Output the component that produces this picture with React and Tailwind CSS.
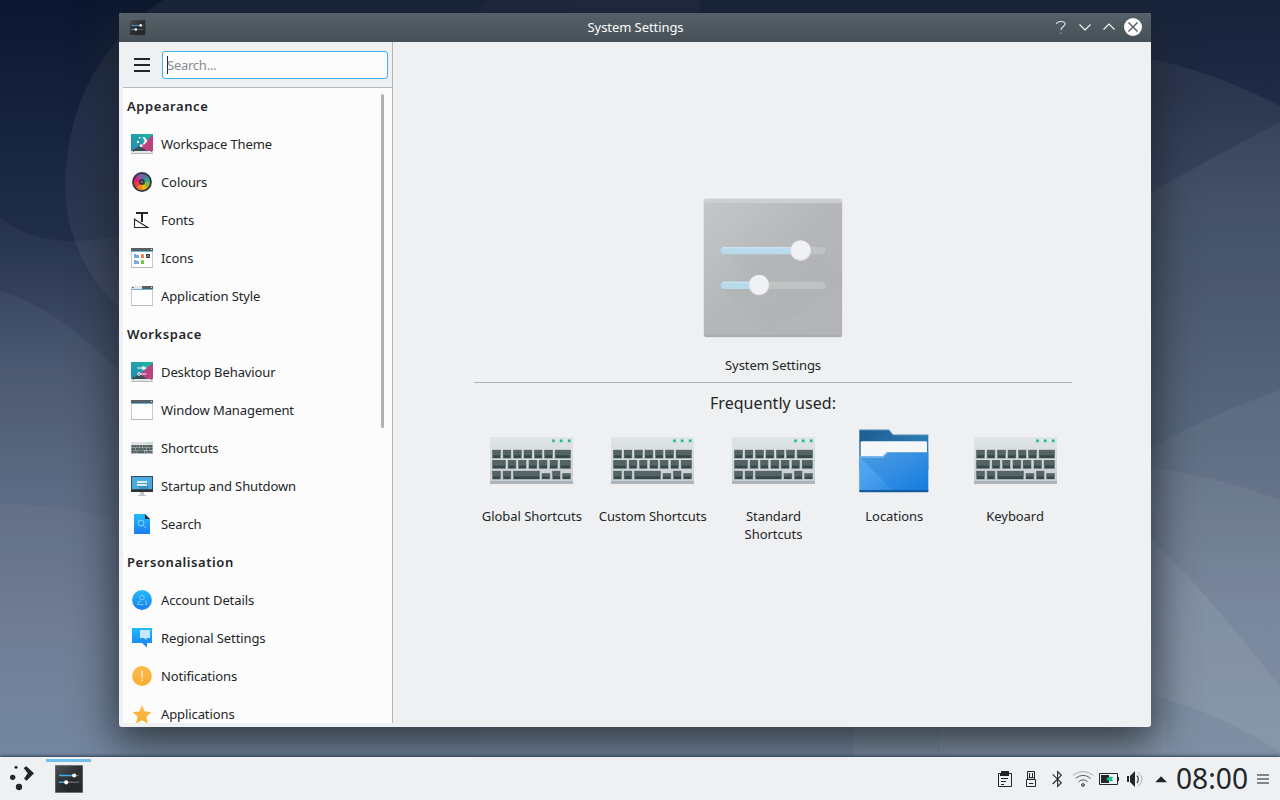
import React from "react";

function Wallpaper() {
  return (
    <svg className="absolute inset-0" width="1280" height="800" viewBox="0 0 1280 800">
      <defs>
        <linearGradient id="sky" x1="0" y1="0" x2="0" y2="757" gradientUnits="userSpaceOnUse">
          <stop offset="0" stopColor="#0b1730" />
          <stop offset="0.16" stopColor="#162340" />
          <stop offset="0.32" stopColor="#212e4a" />
          <stop offset="0.5" stopColor="#3f4e69" />
          <stop offset="0.66" stopColor="#51607a" />
          <stop offset="0.85" stopColor="#61718c" />
          <stop offset="1" stopColor="#657a95" />
        </linearGradient>
        <linearGradient id="east" x1="0" y1="0" x2="0" y2="757" gradientUnits="userSpaceOnUse">
          <stop offset="0" stopColor="#17233b" />
          <stop offset="0.13" stopColor="#1f2b46" />
          <stop offset="0.27" stopColor="#2e3d57" />
          <stop offset="0.5" stopColor="#3f5069" />
          <stop offset="0.65" stopColor="#4b5c75" />
          <stop offset="0.8" stopColor="#5a6c87" />
          <stop offset="1" stopColor="#627690" />
        </linearGradient>
      </defs>
      <rect width="1280" height="800" fill="url(#sky)" />
      <path d="M0 218C28 238 60 250 140 232H900V800H0Z" fill="#fff" opacity="0.04" />
      <path d="M0 291C45 305 80 330 140 392H900V800H0Z" fill="#fff" opacity="0.04" />
      <path d="M0 504C40 504 80 509 140 526H900V800H0Z" fill="#fff" opacity="0.03" />
      <path d="M163 0C90 50 65 120 65 190C67 240 90 290 140 325H570V0Z" fill="#fff" opacity="0.06" />
      <path d="M570 0H1280V800H853L860 400H570Z" fill="url(#east)" />
      <path d="M486 0H570V20H474Z" fill="#fff" opacity="0.02" />
      <path d="M570 0H700V20H570Z" fill="#fff" opacity="0.03" />
      <path d="M860 56H1140Q1215 72 1280 106V800H853Z" fill="#fff" opacity="0.06" />
      <path d="M860 199H1140Q1210 158 1280 122V800H853Z" fill="#fff" opacity="0.05" />
      <path d="M860 455H1140Q1205 416 1280 390V800H853Z" fill="#fff" opacity="0.05" />
      <path d="M860 466H1140Q1210 474 1280 500V800H853Z" fill="#fff" opacity="0.05" />
      <path d="M945 528H1140Q1210 595 1280 687V800H940Z" fill="#fff" opacity="0.07" />
      <path d="M945 693H1140Q1210 707 1280 752V800H940Z" fill="#456587" opacity="0.12" />
      <path d="M1150 640Q1167 680 1167 760H945V640Z" fill="#fff" opacity="0.03" />
      <path d="M474 800C476 770 480 745 486 720H860L853 800Z" fill="#fff" opacity="0.02" />
    </svg>
  );
}

function SettingsTile({ size }) {
  return (
    <svg width={size} height={size} viewBox="0 0 28 28">
      <defs>
        <linearGradient id="tile" x1="0" y1="0" x2="1" y2="1">
          <stop offset="0" stopColor="#4b4f53" />
          <stop offset="0.5" stopColor="#2d3033" />
          <stop offset="1" stopColor="#292b2e" />
        </linearGradient>
      </defs>
      <rect width="28" height="28" rx="0.8" fill="#6d7275" />
      <rect x="0.7" y="1" width="26.6" height="26" fill="url(#tile)" />
      <path d="M4 11l7 6 8-6 8 8v8H12L4 18Z" fill="#1e2022" opacity="0.35" />
      <path d="M4 10.5h15M4 17.3h7" stroke="#3daee9" strokeWidth="1.4" />
      <path d="M19 10.5h5M11 17.3h13" stroke="#606468" strokeWidth="1.4" />
      <circle cx="19.2" cy="10.5" r="2.1" fill="#fcfcfc" />
      <circle cx="11.2" cy="17.3" r="2.1" fill="#fcfcfc" />
    </svg>
  );
}

function BigSettings() {
  return (
    <svg width="140" height="140" viewBox="39 39 420 420">
      <defs>
        <linearGradient id="bigTile" x1="0" y1="0" x2="1" y2="1">
          <stop offset="0" stopColor="#c5c6c8" />
          <stop offset="0.5" stopColor="#b4b6b8" />
          <stop offset="1" stopColor="#b3b4b6" />
        </linearGradient>
      </defs>
      <rect x="40" y="40" width="418" height="418" rx="9" fill="#dfe0e2" />
      <rect x="42" y="42" width="414" height="414" rx="7" fill="#cdced0" />
      <path d="M42 54H456V449Q456 456 449 456H49Q42 456 42 449Z" fill="url(#bigTile)" />
      <path d="M96 204L175 276 96 308 203 409 234 442 456 310V262L398 204Z" fill="#acaeb0" opacity="0.2" />
      <path d="M43 449Q44 456 50 456H448Q455 456 455 449Z" fill="#a9abad" />
      <rect x="93" y="186" width="313" height="22" rx="10" fill="#c1c2c4" />
      <rect x="93" y="290" width="313" height="22" rx="10" fill="#c1c2c4" />
      <path d="M103 186H320V208H103A11 11 0 0 1 103 186ZM103 290H200V312H103A11 11 0 0 1 103 290Z" fill="#b9daeb" />
      <path d="M99 188H310M99 292H190" stroke="#cae4f1" strokeWidth="4" />
      <circle cx="332" cy="197" r="31" fill="#dddee0" />
      <circle cx="207" cy="300" r="31" fill="#dddee0" />
      <circle cx="332" cy="195.500" r="29" fill="#f0f1f3" />
      <circle cx="207" cy="299" r="29" fill="#f0f1f3" />
    </svg>
  );
}

const fullKeys = [
  [67, 240, 25], [99, 240, 24], [130, 240, 25], [161, 240, 25], [193, 240, 24], [223, 240, 25], [255, 240, 47],
  [67, 271, 40], [114, 271, 24], [145, 271, 24], [176, 271, 25], [207, 271, 25], [239, 271, 24], [270, 271, 32],
  [67, 303, 25], [99, 303, 24], [130, 303, 79], [247, 303, 24],
];

function KeyboardPicture({ width, height }) {
  return (
    <svg width={width} height={height} viewBox="60 201 249 141" preserveAspectRatio="none">
      <defs>
        <linearGradient id="kbd" x1="0" y1="0" x2="0" y2="1">
          <stop offset="0" stopColor="#e0e6e7" />
          <stop offset="1" stopColor="#c6cbd0" />
        </linearGradient>
      </defs>
      <path d="M60 201H309V342H60Z" fill="url(#kbd)" />
      <path d="M60 333H309V342H60Z" fill="#abb4bb" />
      {fullKeys.map(([x, y, w]) => (
        <g key={`${x}-${y}`}>
          <rect x={x - 1} y={y - 1} width={w + 2} height="27" fill="#99a4a5" />
          <rect x={x + 1} y={y} width={w - 2} height="24" fill="#34484a" />
          <rect x={x + 1} y={y} width={w - 2} height="16" fill="#566365" />
        </g>
      ))}
      {[215, 277].map((x) => (
        <g key={x}>
          <rect x={x - 1} y="309" width="27" height="19" fill="#99a4a5" />
          <rect x={x + 1} y="311" width="23" height="16" fill="#34484a" />
          <rect x={x + 1} y="311" width="23" height="9" fill="#566365" />
        </g>
      ))}
      {[246, 269, 293].map((x) => (
        <g key={x}>
          <rect x={x - 1} y="207" width="11" height="11" fill="#a6dcc6" />
          <rect x={x + 1} y="209" width="7" height="7" fill="#27b883" />
        </g>
      ))}
    </svg>
  );
}

function FolderPicture() {
  return (
    <svg className="mt-px" width="70" height="64" viewBox="239 176 210 192">
      <defs>
        <linearGradient id="folderBack" x1="0" y1="0" x2="1" y2="0.5">
          <stop offset="0" stopColor="#1b5d90" />
          <stop offset="1" stopColor="#2d7fb8" />
        </linearGradient>
        <linearGradient id="folderFront" x1="0" y1="0" x2="1" y2="1">
          <stop offset="0" stopColor="#4a9ce0" />
          <stop offset="0.45" stopColor="#378fe2" />
          <stop offset="1" stopColor="#127be0" />
        </linearGradient>
        <linearGradient id="folderSheen" x1="0" y1="0" x2="1" y2="1">
          <stop offset="0" stopColor="#5bb1fb" stopOpacity="0.7" />
          <stop offset="1" stopColor="#5bb1fb" stopOpacity="0.1" />
        </linearGradient>
      </defs>
      <path d="M240 178H329L341 193H447V300H240Z" fill="url(#folderBack)" />
      <path d="M240 179H329L341 194H447" fill="none" stroke="#6f9fc3" strokeWidth="2.500" />
      <rect x="244" y="213" width="199" height="60" rx="4" fill="#f6f7f8" />
      <path d="M240 258H311L323 246H447V365H240Z" fill="url(#folderFront)" />
      <path d="M240 260L345 365H240Z" fill="url(#folderSheen)" />
      <path d="M240 260H311L323 248" fill="none" stroke="#79b8ed" strokeWidth="4" />
      <path d="M240 359H447V362Q447 366 443 366H244Q240 366 240 362Z" fill="#155c9f" />
    </svg>
  );
}

function DesktopIcon({ variant }) {
  return (
    <svg width="22" height="22" viewBox="0 0 22 22">
      <defs>
        <linearGradient id="teal" x1="0" y1="1" x2="1" y2="0">
          <stop offset="0" stopColor="#2980b9" />
          <stop offset="1" stopColor="#1abc9c" />
        </linearGradient>
      </defs>
      <path d="M0 1H22V21H0Z" fill="url(#teal)" />
      <path d="M22 2V18H15L9 13Z" fill="#b8437e" />
      <path d="M0 18L8.500 13 16 18Z" fill="#3f4b52" />
      <path d="M0 18H22V20H0Z" fill="#e3e6e9" />
      <path d="M0 20H22V21H0Z" fill="#b4babf" />
      <path d="M2 18.500H3M20 18.500H21" stroke="#6d6d6d" />
      {variant === "theme" ? (
        <g fill="#fff">
          <path d="M11.500 4H13.500L16.500 8 13.500 11.500H11.500L13.800 8Z" />
          <rect x="8" y="4" width="1.400" height="1.400" />
          <rect x="6" y="8" width="2" height="2" />
          <rect x="9" y="11.500" width="2.400" height="2.400" />
        </g>
      ) : (
        <g stroke="#f5f6f7" fill="none">
          <path d="M6 7H15.500M9 13H15.500" />
          <circle cx="12.500" cy="7" r="1.500" fill="#fff" />
          <circle cx="8" cy="13" r="1.300" />
        </g>
      )}
    </svg>
  );
}

function ColoursIcon() {
  const wedges = ["#80b848", "#f0b51c", "#fb8522", "#ef3946", "#df2077", "#9953a4", "#5277a8", "#36a38c"];
  return (
    <svg width="22" height="22" viewBox="-11 -11 22 22">
      <circle r="9.900" fill="#30363a" />
      {wedges.map((c, i) => (
        <path key={c} d="M0 0L8.300 0A8.300 8.300 0 0 1 5.600 6.100Z" fill={c} transform={`rotate(${i * 45})`} />
      ))}
      <circle r="8" fill="none" stroke="#000" strokeOpacity="0.15" />
      <circle r="2.900" fill="#343b3f" />
      <circle r="1" fill="#777d80" />
    </svg>
  );
}

function FontsIcon() {
  return (
    <svg width="22" height="22" viewBox="0 0 22 22">
      <path d="M5 3H17V5H12V13H10V5H5Z" fill="#232629" />
      <path d="M3.500 10.300V18.500H16.800Z" stroke="#232629" strokeWidth="1.100" fill="none" />
    </svg>
  );
}

function WindowIcon({ variant }) {
  return (
    <svg width="22" height="22" viewBox="0 0 22 22">
      <path d="M0 1H22V21H0Z" fill="#c6cacd" />
      <path d="M0 20H22V21H0Z" fill="#b3b8bb" />
      <path d="M1 4H21V20H1Z" fill="#fefefe" />
      <path d="M0 1H22V4H0Z" fill="#566067" />
      {variant === "style" && <path d="M0 1H11V4H0Z" fill="#e3e6e8" />}
      {variant === "style" && <path d="M1 2H2.500V3H1Z" fill="#4d565c" />}
      <path d="M0 4H22V5H0Z" fill="#68b4dc" />
      <path d="M20 2H21V3H20Z" fill="#eef0f1" />
      {variant === "icons" && (
        <g>
          <path d="M3 7H5L6 8H8V11H3ZM3 13H5L6 14H8V17H3Z" fill="#77a9dd" />
          <path d="M10 7H12L13 8V11H10Z" fill="#f67d45" />
          <path d="M10 13H12L13 14V17H10Z" fill="#75c631" />
          <path d="M15 7H19V11H15Z" fill="#36454d" />
          <path d="M16 9.500L17 8.500 18 9.500" stroke="#bcefff" fill="none" />
        </g>
      )}
    </svg>
  );
}

function MonitorIcon() {
  return (
    <svg width="22" height="22" viewBox="0 0 22 22">
      <path d="M0 1H22V17H0Z" fill="#34495e" />
      <path d="M1 2H21V14H1Z" fill="#49abe0" />
      <path d="M6 10L9 14H18L16 8Z" fill="#2c83b4" opacity="0.6" />
      <path d="M0 15H22V17H0Z" fill="#2f3437" />
      <path d="M6 6H16V8H6ZM6 9H16V11H6Z" fill="#dce9f1" />
      <path d="M9 17H13V20H15V21H7V20H9Z" fill="#c3c8cc" />
    </svg>
  );
}

function SearchDocIcon() {
  return (
    <svg width="22" height="22" viewBox="0 0 22 22">
      <defs>
        <linearGradient id="blue" x1="0" y1="0" x2="0" y2="1">
          <stop offset="0" stopColor="#20bcfa" />
          <stop offset="1" stopColor="#1c7cf0" />
        </linearGradient>
      </defs>
      <path d="M3 1H14L19 6V21H3Z" fill="url(#blue)" />
      <path d="M14 1L19 6H14Z" fill="#273238" />
      <circle cx="10" cy="10" r="3" fill="none" stroke="#90d1fc" />
      <path d="M12.200 12.200L15 15" stroke="#90d1fc" />
    </svg>
  );
}

function AccountIcon() {
  return (
    <svg width="22" height="22" viewBox="0 0 22 22">
      <circle cx="11" cy="11" r="9.900" fill="url(#blue)" />
      <g fill="none" stroke="#86cdfb" strokeWidth="0.900">
        <circle cx="11" cy="8.500" r="2.300" />
        <path d="M12.500 15.500H6.500Q6.500 12.500 10 12.200M14 12.500H16M14.500 15.500V14.500M15.500 13.500V16" />
      </g>
    </svg>
  );
}

function RegionalIcon() {
  return (
    <svg width="22" height="22" viewBox="0 0 22 22">
      <path d="M1 1H21V16H16V20.500L11 16H1Z" fill="url(#blue)" />
      <path d="M9 3H19V11H15.500V13L13 11H9Z" fill="#c7e7fd" />
    </svg>
  );
}

function NotificationIcon() {
  return (
    <svg width="22" height="22" viewBox="0 0 22 22">
      <defs>
        <linearGradient id="amber" x1="0" y1="0" x2="0" y2="1">
          <stop offset="0" stopColor="#fdbc4f" />
          <stop offset="1" stopColor="#f9ac30" />
        </linearGradient>
      </defs>
      <circle cx="11" cy="11" r="9.900" fill="url(#amber)" />
      <path d="M11 6V13M11 14.500V16" stroke="#fde3b3" strokeWidth="1.700" />
    </svg>
  );
}

function StarIcon() {
  return (
    <svg width="22" height="22" viewBox="0 0 22 22">
      <path d="M11 2L13.700 8.500 20.500 9 15.400 13.700 17 20.700 11 17.200 5 20.700 6.600 13.700 1.500 9 8.300 8.500Z" fill="url(#amber)" />
    </svg>
  );
}

const sections = [
  {
    title: "Appearance",
    items: [
      ["Workspace Theme", <DesktopIcon variant="theme" />],
      ["Colours", <ColoursIcon />],
      ["Fonts", <FontsIcon />],
      ["Icons", <WindowIcon variant="icons" />],
      ["Application Style", <WindowIcon variant="style" />],
    ],
  },
  {
    title: "Workspace",
    items: [
      ["Desktop Behaviour", <DesktopIcon variant="behaviour" />],
      ["Window Management", <WindowIcon />],
      ["Shortcuts", <KeyboardPicture width={22} height={12} />],
      ["Startup and Shutdown", <MonitorIcon />],
      ["Search", <SearchDocIcon />],
    ],
  },
  {
    title: "Personalisation",
    items: [
      ["Account Details", <AccountIcon />],
      ["Regional Settings", <RegionalIcon />],
      ["Notifications", <NotificationIcon />],
      ["Applications", <StarIcon />],
    ],
  },
];

function TitleBar() {
  return (
    <header className="flex h-[29px] shrink-0 items-center rounded-t-[3px] bg-linear-to-b from-[#556068] to-[#475057] pr-[9px] pl-[10px] text-[#fcfcfc]">
      <div className="w-[87px]">
        <SettingsTile size={17} />
      </div>
      <h1 className="flex-1 text-center tracking-[-0.07px]">System Settings</h1>
      <svg className="mb-px" width="87" height="20" viewBox="0 0 87 20" fill="none" stroke="#fcfcfc" strokeWidth="1.100">
        <path d="M1.500 7Q2 4.500 6 4.500 10 4.500 10 7C10 9.500 6 9.500 6 13" stroke="#e6e8e9" />
        <path d="M6 15.500V17" stroke="#a5abaf" />
        <path d="M24.500 7.500L30 13 35.500 7.500M48.500 12.500L54 7 59.500 12.500" />
        <circle cx="78" cy="10" r="9" fill="#fcfcfc" stroke="none" />
        <path d="M73.500 5.500L82.500 14.500M82.500 5.500L73.500 14.500" stroke="#4b555c" strokeWidth="1.300" />
      </svg>
    </header>
  );
}

function Sidebar() {
  return (
    <aside className="mb-1 flex w-[274px] shrink-0 flex-col border-r border-[#b3b5b8] pl-1">
      <div className="flex h-[46px] shrink-0 items-center border-b border-[#b7b9bb] pr-1 pl-[11px]">
        <button className="flex flex-col gap-1">
          <span className="h-0.5 w-4 bg-[#232629]" />
          <span className="h-0.5 w-4 bg-[#232629]" />
          <span className="h-0.5 w-4 bg-[#232629]" />
        </button>
        <div className="ml-3 flex h-7 flex-1 items-center rounded-[3px] border border-[#3daee9] bg-[#fcfcfc] pl-1">
          <span className="h-[18px] w-px bg-[#232629]" />
          <span className="-ml-px pt-0.5 tracking-[-0.25px] text-[#898b8d]">Search...</span>
        </div>
      </div>
      <div className="flex min-h-0 flex-1 bg-[#fcfcfc]">
        <nav className="-mt-px flex-1 overflow-hidden">
          {sections.map((section) => (
            <section key={section.title}>
              <h2 className="flex h-[38px] items-center pt-0.5 pl-1 font-semibold tracking-[0.57px]">{section.title}</h2>
              {section.items.map(([label, icon]) => (
                <div key={label} className="flex h-[38px] items-center gap-2 pl-2">
                  {icon}
                  <span className="pt-0.5 tracking-[-0.1px]">{label}</span>
                </div>
              ))}
            </section>
          ))}
        </nav>
        <div className="mt-1.5 mr-2 h-[334px] w-[3px] rounded-full bg-[#b0b2b4]" />
      </div>
    </aside>
  );
}

const frequent = ["Global Shortcuts", "Custom Shortcuts", "Standard Shortcuts", "Locations", "Keyboard"];

function Overview() {
  return (
    <main className="flex flex-1 flex-col items-center pt-[156px] pl-0.5">
      <BigSettings />
      <p className="mt-[18px] h-[18px] leading-[18px] tracking-[-0.07px]">System Settings</p>
      <hr className="mt-2 w-[598px] border-[#b1b3b6]" />
      <h2 className="mt-2 text-[16px] leading-6 tracking-[0.06px]">Frequently used:</h2>
      <div className="mt-3 flex w-[605px] pl-px">
        {frequent.map((name) => (
          <div key={name} className="flex w-[121px] flex-col items-center">
            <div className="flex h-[66px] items-center justify-center">
              {name === "Locations" ? <FolderPicture /> : <KeyboardPicture width={83} height={47} />}
            </div>
            <p className="mt-[14px] w-[115px] text-center leading-[18px] tracking-[-0.06px]">{name}</p>
          </div>
        ))}
      </div>
    </main>
  );
}

function TrayIcons() {
  return (
    <svg className="mt-px" width="172" height="24" viewBox="1 -1 516 72" fill="none" stroke="#232629" strokeWidth="3">
      <path d="M5.500 18.500H44.500V57.500H5.500Z" />
      <path d="M13 11H37V26H10V17H13Z" fill="#232629" stroke="none" />
      <path d="M13 33.500H34M13 42.500H28M13 51.500H22" />
      <path d="M92.500 12.500H113.500V36H92.500ZM89.500 36.500H116.500V57.500H89.500Z" />
      <path d="M98.500 17V29M107.500 17V29M96 30.500H111M97 48.500H110" />
      <path d="M168 21L194 46 183 57V13L194 24 168 50" strokeWidth="3.300" />
      <path d="M229 24Q259 1 290 24" stroke="#a4a7a9" />
      <path d="M237 33Q259 15 282 33M246 43Q259 32 273 43" stroke="#595d60" />
      <circle cx="259" cy="53" r="4" />
      <path d="M308.500 18.500H362.500V51.500H308.500ZM365.500 29V41" />
      <path d="M313 23H337V47H313Z" fill="#232629" stroke="none" />
      <path d="M328 35L338 28H346V42H338Z" fill="#1fc29c" stroke="none" />
      <path d="M342 31H349M342 39H349" stroke="#1abc9c" />
      <path d="M391 26H397V44H391ZM400 26L415 11V59L400 44Z" fill="#232629" stroke="none" />
      <path d="M421 25Q429 36 421 47" strokeWidth="4" stroke="#45494c" />
      <path d="M424 15Q448 36 424 57" stroke="#b0b3b5" />
      <path d="M476 45L493 27 511 45Z" fill="#232629" stroke="none" />
    </svg>
  );
}

function Panel() {
  return (
    <footer className="flex h-[43px] items-center bg-[#eff0f2] shadow-[0_-1px_3px_#1c2a3ecc]">
      <svg className="ml-[9px]" width="26" height="28" viewBox="27 198 78 84" fill="#232629">
        <circle cx="48" cy="205" r="4.500" />
        <circle cx="38" cy="235" r="8" />
        <circle cx="57" cy="264" r="9.500" />
        <path d="M71 207L79 202 102 223 80 245 72 239 83 223Z" />
      </svg>
      <div className="ml-[11px] flex h-full w-[45px] flex-col items-center pt-0.5">
        <span className="mb-[3px] h-[3px] w-full bg-[#6fc0eb]" />
        <SettingsTile size={28} />
      </div>
      <div className="ml-auto flex items-center">
        <TrayIcons />
        <time className="ml-[7px] w-[73px] text-[28.200px] leading-[43px] whitespace-nowrap">08:00</time>
        <div className="mt-px mr-[11px] ml-2 flex flex-col gap-0.5">
          <span className="h-0.5 w-3 bg-[#838587]" />
          <span className="h-0.5 w-3 bg-[#838587]" />
          <span className="h-0.5 w-3 bg-[#838587]" />
        </div>
      </div>
    </footer>
  );
}

export default function App() {
  return (
    <div className="relative flex h-[800px] w-[1280px] flex-col justify-end overflow-hidden font-['Noto_Sans',sans-serif] text-[13px] text-[#232629]">
      <Wallpaper />
      <div className="absolute top-[13px] left-[119px] flex h-[714px] w-[1032px] flex-col rounded-[3px] bg-[#eff0f1] shadow-[0_12px_42px_4px_#1e2428cc]">
        <TitleBar />
        <div className="flex min-h-0 flex-1">
          <Sidebar />
          <Overview />
        </div>
      </div>
      <div className="relative">
        <Panel />
      </div>
    </div>
  );
}
